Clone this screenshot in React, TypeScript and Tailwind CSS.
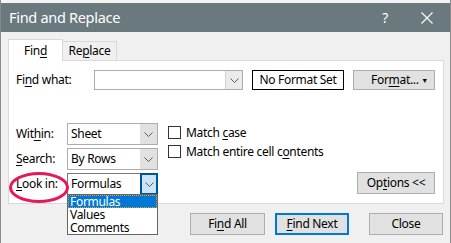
import type { ReactNode } from "react";

const U = ({ children }: { children: ReactNode }) => (
  <span className="underline decoration-1 underline-offset-[2px]">{children}</span>
);

function Chevron() {
  return (
    <svg width="9" height="5" viewBox="0 0 9 5" className="block">
      <path d="M0.5 0.5 L4.5 4.5 L8.5 0.5" fill="none" stroke="#5a5a5a" strokeWidth="1" />
    </svg>
  );
}

function Select({ value, focused, children }: { value: string; focused?: boolean; children?: ReactNode }) {
  return (
    <div
      className={
        "relative flex h-[22px] w-[91px] items-stretch border bg-white " +
        (focused ? "border-[#7a7a7a]" : "border-[#adadad]")
      }
    >
      <span className="flex flex-1 items-center pl-[3px]">{value}</span>
      <span
        className={
          "flex w-[17px] items-center justify-center " +
          (focused ? "-my-px -mr-px w-[18px] border-2 border-[#005499] bg-[#cce4f7]" : "bg-[#e1e1e1]")
        }
      >
        <Chevron />
      </span>
      {children}
    </div>
  );
}

function Check({ children }: { children: ReactNode }) {
  return (
    <div className="flex h-[13px] items-center gap-[5px]">
      <span className="h-[13px] w-[13px] border border-[#333333] bg-white" />
      <span>{children}</span>
    </div>
  );
}

export default function App() {
  return (
    <div className="relative flex h-[243px] w-[451px] flex-col overflow-hidden border-x border-[#8a8a8a] bg-[#f0f0f0] font-['Noto_Sans',sans-serif] text-[12px] leading-none tracking-[-0.3px] text-black">
      <div className="h-[3px] bg-[#f4f4f4]" />
      <div className="flex h-[29px] items-center bg-[#6a797e] pl-[8px] text-white">
        <span className="text-[14.5px]">Find and Replace</span>
        <span className="ml-auto mr-[33px] text-[14px]">?</span>
        <svg width="12" height="12" viewBox="0 0 12 12" className="mr-[17px]">
          <path d="M0.5 0.5 L11.5 11.5 M11.5 0.5 L0.5 11.5" stroke="#ffffff" strokeWidth="1.1" />
        </svg>
      </div>

      <div className="flex flex-col px-[7px] pt-[7px]">
        <div className="flex items-end">
          <div className="relative z-10 -mb-px flex h-[22px] w-[55px] items-center justify-center border border-b-0 border-[#d9d9d9] bg-white">
            Fin<U>d</U>
          </div>
          <div className="flex h-[19px] w-[54px] items-center justify-center border border-l-0 border-b-0 border-[#d9d9d9] bg-[#f0f0f0]">
            Re<U>p</U>lace
          </div>
        </div>

        <div className="flex h-[144px] w-[436px] flex-col border border-[#d9d9d9] bg-white px-[7px]">
          <div className="mt-[9px] flex h-[20px] items-center">
            <span className="w-[78px]">
              Fi<U>n</U>d what:
            </span>
            <div className="flex h-[20px] w-[149px] border border-[#adadad] bg-white">
              <span className="flex-1" />
              <span className="flex w-[17px] items-center justify-center border-l border-[#d0d0d0] bg-[#ebebeb]">
                <Chevron />
              </span>
            </div>
            <div className="ml-[9px] flex h-[20px] w-[92px] items-center justify-center border border-black bg-white">
              No Format Set
            </div>
            <div className="ml-[9px] flex h-[20px] w-[82px] items-center border border-[#adadad] bg-[#e1e1e1] pl-[17px]">
              <span>
                For<U>m</U>at...
              </span>
              <span className="ml-auto mr-[6px] text-[7px]">▼</span>
            </div>
          </div>

          <div className="mt-[33px] flex">
            <div className="flex flex-col gap-[3px]">
              <div className="flex items-center">
                <span className="w-[51px]">
                  Wit<U>h</U>in:
                </span>
                <Select value="Sheet" />
              </div>
              <div className="flex items-center">
                <span className="w-[51px]">
                  <U>S</U>earch:
                </span>
                <Select value="By Rows" />
              </div>
              <div className="flex items-center">
                <span className="w-[51px]">
                  <U>L</U>ook in:
                </span>
                <Select value="Formulas" focused>
                  <div className="absolute left-[-1px] top-full z-20 flex w-[91px] flex-col border border-[#646464] bg-white leading-[12px]">
                    <span className="flex h-[13px] items-center border border-dotted border-[#f0a030] bg-[#0078d7] pl-[1px] text-white">
                      Formulas
                    </span>
                    <span className="flex h-[13px] items-center pl-[2px]">Values</span>
                    <span className="flex h-[13px] items-center pl-[2px]">Comments</span>
                  </div>
                </Select>
              </div>
            </div>

            <div className="ml-[10px] flex flex-col gap-[6px] pt-[3px]">
              <Check>
                Match <U>c</U>ase
              </Check>
              <Check>
                Match entire cell c<U>o</U>ntents
              </Check>
            </div>

            <div className="mb-[1px] ml-auto mr-[1px] flex h-[22px] w-[78px] items-center justify-center self-end border border-[#adadad] bg-[#e1e1e1]">
              Op<U>t</U>ions &lt;&lt;
            </div>
          </div>
        </div>

        <div className="mt-[9px] flex h-[22px] justify-end gap-[10px]">
          <div className="flex w-[75px] items-center justify-center border border-[#adadad] bg-[#e1e1e1]">
            Fi<U>n</U>d All
          </div>
          <div className="flex w-[74px] items-center justify-center border-2 border-[#0078d7] bg-[#e1e1e1]">
            <U>F</U>ind Next
          </div>
          <div className="ml-[10px] flex w-[74px] items-center justify-center border border-[#adadad] bg-[#e1e1e1]">
            Close
          </div>
        </div>
      </div>

      <div className="pointer-events-none absolute left-[8px] top-[172px] z-30 h-[31px] w-[60px] rounded-[50%] border-[3px] border-[#e5185e]" />
    </div>
  );
}
